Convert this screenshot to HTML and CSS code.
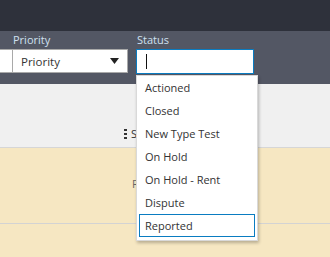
FILE: index.html
```html
<!DOCTYPE html>
<html>
<head>
<meta charset="utf-8">
<link rel="stylesheet" href="styles.css">
</head>
<body>
<div class="topbar"></div>
<div class="filters">
  <div class="field field-prev">
    <div class="label">&nbsp;</div>
    <div class="select"></div>
  </div>
  <div class="field field-priority">
    <div class="label">Priority</div>
    <div class="select">
      <span>Priority</span>
      <svg class="arrow" width="9" height="6" viewBox="0 0 9 6"><path d="M0 0h9L4.5 6z" fill="#222"/></svg>
    </div>
  </div>
  <div class="field field-status">
    <div class="label">Status</div>
    <div class="input"><span class="caret"></span></div>
    <ul class="dropdown">
      <li>Actioned</li>
      <li>Closed</li>
      <li>New Type Test</li>
      <li>On Hold</li>
      <li>On Hold - Rent</li>
      <li>Dispute</li>
      <li class="active">Reported</li>
    </ul>
  </div>
</div>
<div class="row row-head">
  <div class="menu"><span class="dots"></span><span class="col">S</span></div>
</div>
<div class="row row-a">
  <span class="cell">F</span>
</div>
<div class="row row-b"></div>
</body>
</html>
```

FILE: styles.css
```css
html, body {
  margin: 0;
  padding: 0;
  width: 330px;
  height: 257px;
  overflow: hidden;
  font-family: "Open Sans", "Noto Sans", sans-serif;
  font-size: 11px;
  background: #f6e7c2;
}
.topbar {
  height: 31px;
  background: #2e313b;
}
.filters {
  height: 53px;
  background: #535764;
  display: flex;
  gap: 8px;
  box-sizing: border-box;
}
.field {
  position: relative;
  display: flex;
  flex-direction: column;
}
.label {
  color: #cfe0f0;
  height: 18px;
  line-height: 18px;
  padding-left: 1px;
}
.field-prev {
  width: 4px;
}
.field-prev .select {
  width: 4px;
  border-left: none;
}
.field-priority {
  width: 116px;
}
.field-status {
  width: 118px;
}
.select {
  height: 24px;
  background: #fff;
  border: 1px solid #a9a9a9;
  box-sizing: border-box;
  display: flex;
  align-items: center;
  padding: 0 8px;
  color: #333;
  font-size: 11.5px;
}
.select span {
  flex: 1;
}
.input {
  height: 25px;
  background: #fff;
  border: 1px solid #0a7cc1;
  box-sizing: border-box;
  display: flex;
  align-items: center;
  padding-left: 9px;
}
.caret {
  width: 1px;
  height: 15px;
  background: #111;
}
.dropdown {
  position: absolute;
  left: 0;
  top: 44px;
  width: 122px;
  margin: 0;
  padding: 0 2px 3px 2px;
  box-sizing: border-box;
  list-style: none;
  background: #fff;
  border: 1px solid #d9d9d9;
  box-shadow: 1px 2px 3px rgba(0,0,0,0.25);
  z-index: 2;
}
.dropdown li {
  height: 23px;
  line-height: 21px;
  padding-left: 5px;
  color: #333;
  border: 1px solid transparent;
  box-sizing: border-box;
  white-space: nowrap;
}
.dropdown li.active {
  border-color: #0a7cc1;
  line-height: 22px;
}
.row-head {
  height: 63px;
  background: #f0f0f0;
  border-bottom: 1px solid #d6d6d6;
  position: relative;
}
.menu {
  position: absolute;
  left: 124px;
  top: 42px;
  display: flex;
  align-items: center;
  gap: 4px;
  color: #333;
}
.dots {
  width: 3px;
  height: 11px;
  background: radial-gradient(circle, #333 1.3px, transparent 1.5px) 0 0 / 3px 4px repeat-y;
}
.row-a {
  height: 75px;
  border-bottom: 1px solid #d3d3d3;
  position: relative;
}
.cell {
  position: absolute;
  left: 132px;
  top: 28px;
  color: #666;
}
.row-b {
  height: 40px;
}
```
